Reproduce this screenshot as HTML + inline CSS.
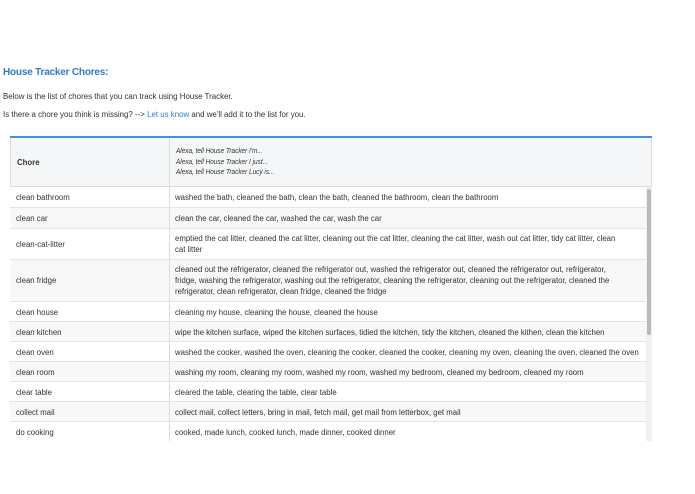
<!DOCTYPE html>
<html><head><meta charset="utf-8"><style>
*{margin:0;padding:0;box-sizing:border-box}
body{width:695px;height:494px;background:#fff;font-family:"Liberation Sans",sans-serif;color:#333;position:relative;overflow:hidden}
.a{position:absolute;white-space:nowrap}
h1{position:absolute;left:3px;top:67px;font-size:10px;color:#2f7ac6;font-weight:bold;letter-spacing:-0.2px}
.p{font-size:7.9px;color:#333}
a{color:#2f7ac6;text-decoration:none}
.tbl{position:absolute;left:10px;top:136px;width:642px;height:305px;overflow:hidden;border-top:2px solid #4a90d9}
.hd{position:absolute;left:0;top:0;width:642px;height:49px;background:#f4f6f8;border-bottom:1px solid #ddd;border-left:1px solid #ddd;border-right:1px solid #ddd}
.r{position:absolute;left:0;width:636px;border-bottom:1px solid #e4e4e4;font-size:7.8px;color:#333}
.r .c1{position:absolute;left:6px}
.r .c2{position:absolute;left:165px;width:466px;white-space:normal;line-height:11px}
.vl{position:absolute;left:159px;top:0;width:1px;height:305px;background:#ddd}
.g{background:#f8f8f8}
.sb{position:absolute;left:636px;top:49px;width:6px;height:256px;background:#f0f0f0}
.th{position:absolute;left:637px;top:51px;width:4px;height:146px;background:#b9b9b9;border-radius:2px}
</style></head><body>
<h1>House Tracker Chores:</h1>
<div class="a p" style="left:3px;top:92px">Below is the list of chores that you can track using House Tracker.</div>
<div class="a p" style="left:3px;top:110px">Is there a chore you think is missing? --&gt; <a>Let us know</a> and we'll add it to the list for you.</div>
<div class="tbl">
<div class="hd">
<div class="a" style="left:6px;top:20px;font-size:7.8px;font-weight:bold;color:#333">Chore</div>
<div class="a" style="left:165px;top:8px;font-size:7.3px;font-style:italic;line-height:10.5px;transform:scaleX(0.88);transform-origin:0 0">Alexa, tell House Tracker I'm...<br>Alexa, tell House Tracker I just...<br>Alexa, tell House Tracker Lucy is...</div>
</div>
<div class="r" style="top:49px;height:21px"><span class="c1" style="top:6px">clean bathroom</span><span class="c2" style="top:6px;line-height:normal">washed the bath, cleaned the bath, clean the bath, cleaned the bathroom, clean the bathroom</span></div>
<div class="r g" style="top:70px;height:21px"><span class="c1" style="top:6px">clean car</span><span class="c2" style="top:6px;line-height:normal">clean the car, cleaned the car, washed the car, wash the car</span></div>
<div class="r" style="top:91px;height:31px"><span class="c1" style="top:11px">clean-cat-litter</span><span class="c2" style="top:4px">emptied the cat litter, cleaned the cat litter, cleaning out the cat litter, cleaning the cat litter, wash out cat litter, tidy cat litter, clean<br>cat litter</span></div>
<div class="r g" style="top:122px;height:42px"><span class="c1" style="top:16px">clean fridge</span><span class="c2" style="top:4px">cleaned out the refrigerator, cleaned the refrigerator out, washed the refrigerator out, cleaned the refrigerator out, refrigerator,<br>fridge, washing the refrigerator, washing out the refrigerator, cleaning the refrigerator, cleaning out the refrigerator, cleaned the<br>refrigerator, clean refrigerator, clean fridge, cleaned the fridge</span></div>
<div class="r" style="top:164px;height:20px"><span class="c1" style="top:6px">clean house</span><span class="c2" style="top:6px;line-height:normal">cleaning my house, cleaning the house, cleaned the house</span></div>
<div class="r g" style="top:184px;height:20px"><span class="c1" style="top:6px">clean kitchen</span><span class="c2" style="top:6px;line-height:normal">wipe the kitchen surface, wiped the kitchen surfaces, tidied the kitchen, tidy the kitchen, cleaned the kithen, clean the kitchen</span></div>
<div class="r" style="top:204px;height:20px"><span class="c1" style="top:6px">clean oven</span><span class="c2" style="top:6px;line-height:normal;white-space:nowrap">washed the cooker, washed the oven, cleaning the cooker, cleaned the cooker, cleaning my oven, cleaning the oven, cleaned the oven</span></div>
<div class="r g" style="top:224px;height:20px"><span class="c1" style="top:6px">clean room</span><span class="c2" style="top:6px;line-height:normal">washing my room, cleaning my room, washed my room, washed my bedroom, cleaned my bedroom, cleaned my room</span></div>
<div class="r" style="top:244px;height:20px"><span class="c1" style="top:6px">clear table</span><span class="c2" style="top:6px;line-height:normal">cleared the table, clearing the table, clear table</span></div>
<div class="r g" style="top:264px;height:20px"><span class="c1" style="top:6px">collect mail</span><span class="c2" style="top:6px;line-height:normal">collect mail, collect letters, bring in mail, fetch mail, get mail from letterbox, get mail</span></div>
<div class="r" style="top:284px;height:21px"><span class="c1" style="top:6px">do cooking</span><span class="c2" style="top:6px;line-height:normal">cooked, made lunch, cooked lunch, made dinner, cooked dinner</span></div>
<div class="vl"></div>
<div class="sb"></div><div class="th"></div>
</div>
</body></html>
